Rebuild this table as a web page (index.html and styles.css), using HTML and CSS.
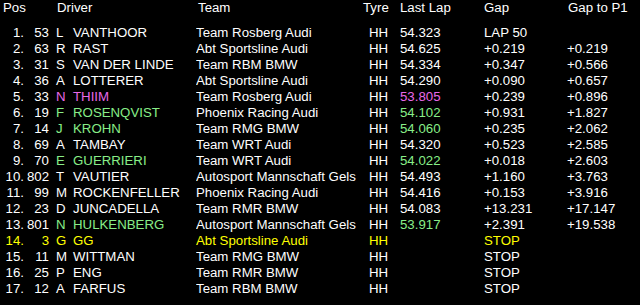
FILE: index.html
```html
<!DOCTYPE html>
<html>
<head>
<meta charset="utf-8">
<link rel="stylesheet" href="styles.css">
</head>
<body>
<div class="board">
  <div class="row head">
    <span class="hpos">Pos</span><span class="hdrv">Driver</span><span class="team hteam">Team</span><span class="htyre">Tyre</span><span>Last Lap</span><span>Gap</span><span>Gap to P1</span>
  </div>
  <div class="rows">
    <div class="row"><span class="r">1.</span><span class="r">53</span><span class="ini">L</span><span>VANTHOOR</span><span class="team">Team Rosberg Audi</span><span class="tyre">HH</span><span>54.323</span><span>LAP 50</span><span></span></div>
    <div class="row"><span class="r">2.</span><span class="r">63</span><span class="ini">R</span><span>RAST</span><span class="team">Abt Sportsline Audi</span><span class="tyre">HH</span><span>54.625</span><span>+0.219</span><span>+0.219</span></div>
    <div class="row"><span class="r">3.</span><span class="r">31</span><span class="ini">S</span><span>VAN DER LINDE</span><span class="team">Team RBM BMW</span><span class="tyre">HH</span><span>54.334</span><span>+0.347</span><span>+0.566</span></div>
    <div class="row"><span class="r">4.</span><span class="r">36</span><span class="ini">A</span><span>LOTTERER</span><span class="team">Abt Sportsline Audi</span><span class="tyre">HH</span><span>54.290</span><span>+0.090</span><span>+0.657</span></div>
    <div class="row"><span class="r">5.</span><span class="r">33</span><span class="ini mag">N</span><span class="mag">THIIM</span><span class="team">Team Rosberg Audi</span><span class="tyre">HH</span><span class="mag">53.805</span><span>+0.239</span><span>+0.896</span></div>
    <div class="row"><span class="r">6.</span><span class="r">19</span><span class="ini grn">F</span><span class="grn">ROSENQVIST</span><span class="team">Phoenix Racing Audi</span><span class="tyre">HH</span><span class="grn">54.102</span><span>+0.931</span><span>+1.827</span></div>
    <div class="row"><span class="r">7.</span><span class="r">14</span><span class="ini grn">J</span><span class="grn">KROHN</span><span class="team">Team RMG BMW</span><span class="tyre">HH</span><span class="grn">54.060</span><span>+0.235</span><span>+2.062</span></div>
    <div class="row"><span class="r">8.</span><span class="r">69</span><span class="ini">A</span><span>TAMBAY</span><span class="team">Team WRT Audi</span><span class="tyre">HH</span><span>54.320</span><span>+0.523</span><span>+2.585</span></div>
    <div class="row"><span class="r">9.</span><span class="r">70</span><span class="ini grn">E</span><span class="grn">GUERRIERI</span><span class="team">Team WRT Audi</span><span class="tyre">HH</span><span class="grn">54.022</span><span>+0.018</span><span>+2.603</span></div>
    <div class="row"><span class="r">10.</span><span class="r">802</span><span class="ini">T</span><span>VAUTIER</span><span class="team">Autosport Mannschaft Gels</span><span class="tyre">HH</span><span>54.493</span><span>+1.160</span><span>+3.763</span></div>
    <div class="row"><span class="r">11.</span><span class="r">99</span><span class="ini">M</span><span>ROCKENFELLER</span><span class="team">Phoenix Racing Audi</span><span class="tyre">HH</span><span>54.416</span><span>+0.153</span><span>+3.916</span></div>
    <div class="row"><span class="r">12.</span><span class="r">23</span><span class="ini">D</span><span>JUNCADELLA</span><span class="team">Team RMR BMW</span><span class="tyre">HH</span><span>54.083</span><span>+13.231</span><span>+17.147</span></div>
    <div class="row"><span class="r">13.</span><span class="r">801</span><span class="ini grn">N</span><span class="grn">HULKENBERG</span><span class="team">Autosport Mannschaft Gels</span><span class="tyre">HH</span><span class="grn">53.917</span><span>+2.391</span><span>+19.538</span></div>
    <div class="row yel"><span class="r">14.</span><span class="r">3</span><span class="ini">G</span><span>GG</span><span class="team">Abt Sportsline Audi</span><span class="tyre">HH</span><span></span><span>STOP</span><span></span></div>
    <div class="row"><span class="r">15.</span><span class="r">11</span><span class="ini">M</span><span>WITTMAN</span><span class="team">Team RMG BMW</span><span class="tyre">HH</span><span></span><span>STOP</span><span></span></div>
    <div class="row"><span class="r">16.</span><span class="r">25</span><span class="ini">P</span><span>ENG</span><span class="team">Team RMR BMW</span><span class="tyre">HH</span><span></span><span>STOP</span><span></span></div>
    <div class="row"><span class="r">17.</span><span class="r">12</span><span class="ini">A</span><span>FARFUS</span><span class="team">Team RBM BMW</span><span class="tyre">HH</span><span></span><span>STOP</span><span></span></div>
  </div>
</div>
</body>
</html>
```

FILE: styles.css
```css
html, body {
  margin: 0;
  padding: 0;
  background: #000;
}
body {
  width: 640px;
  height: 305px;
  overflow: hidden;
  color: #fff;
  font-family: "Liberation Sans", Arial, sans-serif;
  font-size: 13.25px;
  line-height: 16px;
}
.board {
  display: flex;
  flex-direction: column;
  gap: 9px;
}
.row {
  display: grid;
  grid-template-columns: 24px 25px 24px 123px 170px 34px 84px 83px 1fr;
  height: 16px;
  white-space: nowrap;
}
.head {
  grid-template-columns: 56px 140px 167px 37px 84px 84px 1fr;
}
.hpos { padding-left: 3px; }
.hdrv { padding-left: 1px; }
.hteam { padding-left: 2px; }
.r { text-align: right; }
.ini { padding-left: 7px; }
.team { overflow: hidden; }
.tyre { padding-left: 3px; }
.mag { color: #e868e8; }
.grn { color: #88ee88; }
.yel { color: #ffff00; }
```
